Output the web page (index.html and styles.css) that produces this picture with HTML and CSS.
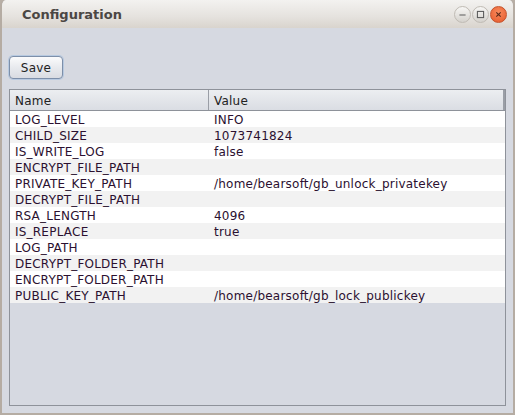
FILE: index.html
```html
<!DOCTYPE html>
<html>
<head>
<meta charset="utf-8">
<link rel="stylesheet" href="styles.css">
</head>
<body>
<div class="window">
  <div class="titlebar">
    <span class="title">Configuration</span>
    <div class="controls">
      <span class="ctl ctl-min"><svg width="17" height="17" viewBox="0 0 17 17"><line x1="5" y1="9" x2="12" y2="9" stroke="#5a5a5a" stroke-width="1.2"/></svg></span>
      <span class="ctl ctl-max"><svg width="17" height="17" viewBox="0 0 17 17"><rect x="5" y="5" width="7" height="7" fill="none" stroke="#5a5a5a" stroke-width="1.2"/></svg></span>
      <span class="ctl ctl-close"><svg width="17" height="17" viewBox="0 0 17 17"><path d="M6 6 L11 11 M11 6 L6 11" stroke="#5b2a1a" stroke-width="1.3"/></svg></span>
    </div>
  </div>
  <div class="content">
    <button class="save">Save</button>
    <div class="table">
      <div class="thead">
        <div class="th th-name">Name</div>
        <div class="th th-value">Value</div>
      </div>
      <div class="tbody">
        <div class="row"><span class="c1">LOG_LEVEL</span><span class="c2">INFO</span></div>
        <div class="row"><span class="c1">CHILD_SIZE</span><span class="c2">1073741824</span></div>
        <div class="row"><span class="c1">IS_WRITE_LOG</span><span class="c2">false</span></div>
        <div class="row"><span class="c1">ENCRYPT_FILE_PATH</span><span class="c2"></span></div>
        <div class="row"><span class="c1">PRIVATE_KEY_PATH</span><span class="c2">/home/bearsoft/gb_unlock_privatekey</span></div>
        <div class="row"><span class="c1">DECRYPT_FILE_PATH</span><span class="c2"></span></div>
        <div class="row"><span class="c1">RSA_LENGTH</span><span class="c2">4096</span></div>
        <div class="row"><span class="c1">IS_REPLACE</span><span class="c2">true</span></div>
        <div class="row"><span class="c1">LOG_PATH</span><span class="c2"></span></div>
        <div class="row"><span class="c1">DECRYPT_FOLDER_PATH</span><span class="c2"></span></div>
        <div class="row"><span class="c1">ENCRYPT_FOLDER_PATH</span><span class="c2"></span></div>
        <div class="row"><span class="c1">PUBLIC_KEY_PATH</span><span class="c2">/home/bearsoft/gb_lock_publickey</span></div>
      </div>
    </div>
  </div>
</div>
</body>
</html>
```
FILE: styles.css
```css
html, body {
  margin: 0;
  padding: 0;
  width: 515px;
  height: 415px;
  overflow: hidden;
  background: #b8afa6;
}
.window {
  box-sizing: border-box;
  width: 515px;
  height: 415px;
  border: 2px solid #b5aca3;
  border-top: 0;
  border-radius: 6px 6px 0 0;
  display: flex;
  flex-direction: column;
  background: #d6d9e1;
  overflow: hidden;
}
.titlebar {
  height: 28px;
  flex: none;
  background: linear-gradient(#f3f2f0, #e5e2de 60%, #d9d4cd);
  display: flex;
  align-items: center;
  justify-content: space-between;
  padding: 0 6px 0 20px;
}
.title {
  font-family: "DejaVu Sans", sans-serif;
  font-weight: bold;
  font-size: 13px;
  color: #4b4744;
  margin-top: 1px;
}
.controls {
  display: flex;
  gap: 1px;
  margin-top: 1px;
}
.ctl {
  width: 17px;
  height: 17px;
  border-radius: 50%;
  display: flex;
  align-items: center;
  justify-content: center;
  box-sizing: border-box;
}
.ctl-min, .ctl-max {
  background: linear-gradient(#f7f6f4, #d5d2cd);
  border: 1px solid #c0bbb4;
}
.ctl-close {
  background: radial-gradient(circle at 50% 35%, #f88a5c, #e5582a);
  border: 1px solid #c4532c;
}
.content {
  flex: 1;
  display: flex;
  flex-direction: column;
  padding: 28px 7px 7px 7px;
  gap: 10px;
}
.save {
  align-self: flex-start;
  width: 54px;
  height: 23px;
  margin: 0;
  padding: 0;
  border: 1px solid #7d8fa9;
  border-radius: 4px;
  background: linear-gradient(#fbfbfc, #e8eaee 50%, #d9dce2);
  box-shadow: 0 0 0 1px #b7c9e0;
  font-family: "DejaVu Sans", sans-serif;
  font-size: 12px;
  letter-spacing: 0.2px;
  color: #222;
}
.table {
  flex: 1;
  border: 1px solid #8e929a;
  display: flex;
  flex-direction: column;
  font-family: "DejaVu Sans", sans-serif;
  font-size: 12px;
  letter-spacing: 0.22px;
}
.thead {
  display: flex;
  height: 20px;
  border-bottom: 1px solid #8e929a;
  background: linear-gradient(#eceef1, #dadde3);
}
.th {
  display: flex;
  align-items: center;
  padding-left: 5px;
  padding-top: 1px;
  color: #222;
  box-sizing: border-box;
}
.th-name {
  width: 199px;
  border-right: 1px solid #9a9ea6;
}
.th-value {
  flex: 1;
  border-right: 2px solid #9a9ea6;
}
.row {
  display: flex;
  height: 16px;
  box-sizing: border-box;
  padding-top: 1px;
  align-items: center;
  color: #2b1030;
  background: #ffffff;
}
.row:nth-child(even) {
  background: #f2f2f2;
}
.c1 {
  width: 199px;
  padding-left: 5px;
  box-sizing: border-box;
  white-space: nowrap;
}
.c2 {
  padding-left: 5px;
  white-space: nowrap;
}
```
